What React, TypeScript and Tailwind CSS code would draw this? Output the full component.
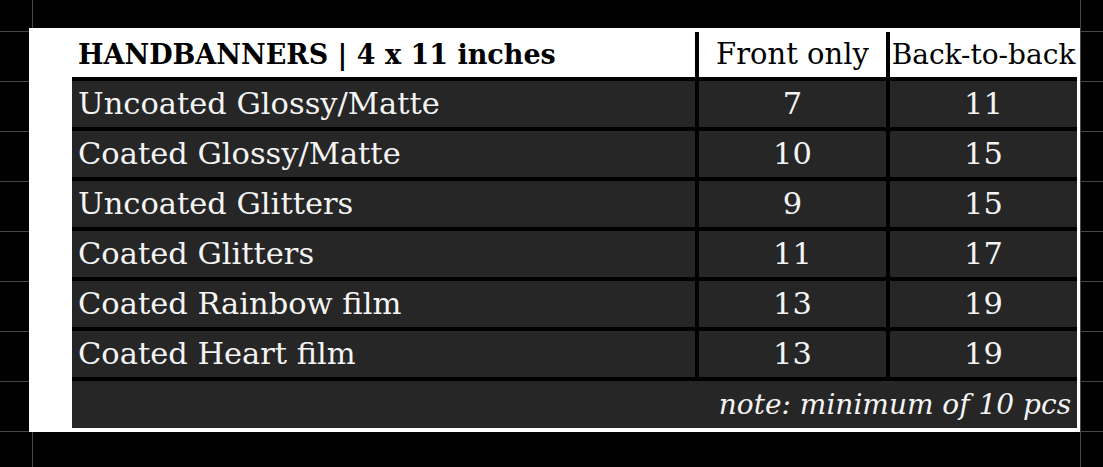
import React from 'react';

const rows: [string, string, string][] = [
  ['Uncoated Glossy/Matte', '7', '11'],
  ['Coated Glossy/Matte', '10', '15'],
  ['Uncoated Glitters', '9', '15'],
  ['Coated Glitters', '11', '17'],
  ['Coated Rainbow film', '13', '19'],
  ['Coated Heart film', '13', '19'],
];

export default function App() {
  return (
    <div className="w-[1103px] h-[467px] overflow-hidden bg-black bg-[image:linear-gradient(to_right,transparent_32px,#474747_32px,#474747_33px,transparent_33px,transparent_1080px,#474747_1080px,#474747_1081px,transparent_1081px),repeating-linear-gradient(to_bottom,transparent_0,transparent_31px,#474747_31px,#474747_32px,transparent_32px,transparent_50px)] pt-[28px] pl-[29px] font-['DejaVu_Serif',serif]">
      <div className="w-[1051px] h-[404px] bg-white pt-[4px] pl-[43px]">
        <div className="grid grid-cols-[623px_187px_187px] gap-[4px] bg-black w-[1005px] text-[30.5px] leading-none">
          <div className="h-[45px] bg-white flex items-center px-[6px] font-bold text-[27px] text-black whitespace-nowrap">
            HANDBANNERS | 4 x 11 inches
          </div>
          <div className="h-[45px] bg-white flex items-center justify-center text-[29px] text-black whitespace-nowrap">Front only</div>
          <div className="h-[45px] bg-white flex items-center justify-center text-[28px] text-black whitespace-nowrap">Back-to-back</div>
          {rows.map(([name, front, back]) => (
            <React.Fragment key={name}>
              <div className="h-[46px] bg-[#262626] flex items-center px-[6px] pt-[1px] text-[#f4f4f4]">{name}</div>
              <div className="h-[46px] bg-[#262626] flex items-center justify-center pt-[1px] text-[#f4f4f4]">{front}</div>
              <div className="h-[46px] bg-[#262626] flex items-center justify-center pt-[1px] text-[#f4f4f4]">{back}</div>
            </React.Fragment>
          ))}
          <div className="col-span-3 h-[47px] bg-[#262626] flex items-center justify-end pr-[6px] italic text-[28px] text-[#f4f4f4]">
            note: minimum of 10 pcs
          </div>
        </div>
      </div>
    </div>
  );
}
